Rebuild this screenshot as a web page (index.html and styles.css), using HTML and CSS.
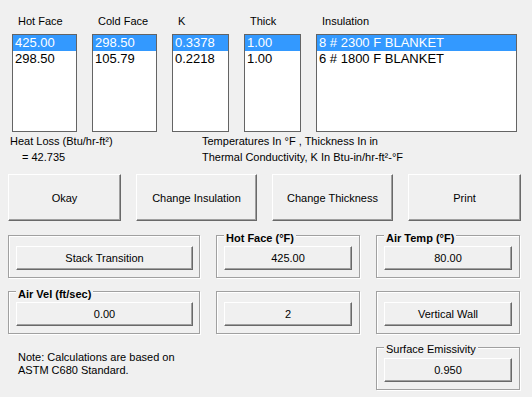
FILE: index.html
```html
<!DOCTYPE html>
<html lang="en">
<head>
  <meta charset="UTF-8">
  <title>Heat Loss Calculator</title>
  <link rel="stylesheet" href="styles.css">
</head>
<body>

  <div class="window">

    <div class="lists">
      <div class="col col-hot">
        <div class="col-label">Hot Face</div>
        <div class="listbox">
          <div class="item selected">425.00</div>
          <div class="item">298.50</div>
        </div>
      </div>
      <div class="col col-cold">
        <div class="col-label">Cold Face</div>
        <div class="listbox">
          <div class="item selected">298.50</div>
          <div class="item">105.79</div>
        </div>
      </div>
      <div class="col col-k">
        <div class="col-label">K</div>
        <div class="listbox">
          <div class="item selected">0.3378</div>
          <div class="item">0.2218</div>
        </div>
      </div>
      <div class="col col-thick">
        <div class="col-label">Thick</div>
        <div class="listbox">
          <div class="item selected">1.00</div>
          <div class="item">1.00</div>
        </div>
      </div>
      <div class="col col-ins">
        <div class="col-label">Insulation</div>
        <div class="listbox">
          <div class="item selected">8 # 2300 F BLANKET</div>
          <div class="item">6 # 1800 F BLANKET</div>
        </div>
      </div>
    </div>

    <div class="info">
      <div class="info-left">
        <div>Heat Loss (Btu/hr-ft²)</div>
        <div class="result">= 42.735</div>
      </div>
      <div class="info-right">
        <div>Temperatures In °F , Thickness In in</div>
        <div>Thermal Conductivity, K In Btu-in/hr-ft²-°F</div>
      </div>
    </div>

    <div class="actions">
      <button class="btn btn-big btn-short">Okay</button>
      <button class="btn btn-big">Change Insulation</button>
      <button class="btn btn-big">Change Thickness</button>
      <button class="btn btn-big btn-short">Print</button>
    </div>

    <div class="group-row">
      <div class="group group-wide">
        <button class="btn btn-small btn-wide">Stack Transition</button>
      </div>
      <div class="group group-mid">
        <span class="group-title">Hot Face (°F)</span>
        <button class="btn btn-small">425.00</button>
      </div>
      <div class="group group-right">
        <span class="group-title">Air Temp (°F)</span>
        <button class="btn btn-small">80.00</button>
      </div>
    </div>

    <div class="group-row">
      <div class="group group-wide">
        <span class="group-title">Air Vel (ft/sec)</span>
        <button class="btn btn-small btn-wide">0.00</button>
      </div>
      <div class="group group-mid">
        <button class="btn btn-small">2</button>
      </div>
      <div class="group group-right">
        <button class="btn btn-small">Vertical Wall</button>
      </div>
    </div>

    <div class="group-row last-row">
      <div class="note">
        Note: Calculations are based on<br>
        ASTM C680 Standard.
      </div>
      <div class="group group-right">
        <span class="group-title plain">Surface Emissivity</span>
        <button class="btn btn-small">0.950</button>
      </div>
    </div>

  </div>

</body>
</html>
```

FILE: styles.css
```css
body {
  margin: 0;
  padding: 0;
  background-color: #f0f0f0;
  font-family: 'Liberation Sans', Arial, sans-serif;
  font-size: 11px;
  line-height: 13px;
  color: #000000;
}

.window {
  width: 532px;
  height: 397px;
  overflow: hidden;
}

/* list columns */
.lists {
  display: flex;
  gap: 15px;
  padding: 15px 0 0 12px;
}

.col-label {
  padding-left: 6px;
  height: 13px;
  margin-bottom: 6px;
}

.col-hot .listbox,
.col-cold .listbox {
  width: 65px;
}

.col-k .listbox,
.col-thick .listbox {
  width: 57px;
}

.col-ins .listbox {
  width: 201px;
}

.listbox {
  box-sizing: border-box;
  height: 98px;
  background-color: #ffffff;
  border: 1px solid #646464;
  font-size: 13px;
}

.item {
  height: 16px;
  line-height: 16px;
  padding-left: 2px;
  white-space: nowrap;
}

.item.selected {
  background-color: #3399ff;
  color: #ffffff;
}

/* heat loss + units */
.info {
  display: flex;
  margin-top: 1px;
  line-height: 16px;
}

.info-left {
  width: 192px;
  padding-left: 10px;
}

.result {
  padding-left: 12px;
}

/* buttons */
.btn {
  box-sizing: border-box;
  display: block;
  margin: 0;
  padding: 0;
  font-family: 'Liberation Sans', Arial, sans-serif;
  font-size: 11px;
  color: #000000;
  background-color: #f0f0f0;
  border: 1px solid;
  border-color: #ffffff #696969 #696969 #ffffff;
  box-shadow: inset -1px -1px 0 #a0a0a0;
  text-align: center;
  cursor: pointer;
}

.actions {
  display: flex;
  gap: 15px;
  margin-top: 9px;
  padding-left: 8px;
}

.btn-big {
  width: 121px;
  height: 47px;
}

.btn-big.btn-short {
  width: 113px;
}

.btn-small {
  width: 128px;
  height: 24px;
}

.btn-small.btn-wide {
  width: 177px;
}

/* group boxes */
.group-row {
  display: flex;
  margin-top: 13px;
  padding-left: 8px;
}

.actions + .group-row {
  margin-top: 14px;
}

.group {
  position: relative;
  box-sizing: border-box;
  height: 43px;
  padding: 10px 0 0 7px;
  border: 1px solid #a0a0a0;
  box-shadow: inset 1px 1px 0 #ffffff, 1px 1px 0 #ffffff;
}

.group-wide {
  width: 192px;
}

.group-mid {
  width: 144px;
  margin-left: 16px;
}

.group-right {
  width: 144px;
  margin-left: 16px;
}

.group-title {
  position: absolute;
  top: -4px;
  left: 7px;
  padding: 0 2px;
  background-color: #f0f0f0;
  font-weight: bold;
  white-space: nowrap;
}

.group-title.plain {
  top: -5px;
  font-weight: normal;
}

.last-row .group-right {
  margin-left: 0;
}

.note {
  width: 368px;
  padding: 4px 0 0 10px;
  box-sizing: border-box;
}
```
